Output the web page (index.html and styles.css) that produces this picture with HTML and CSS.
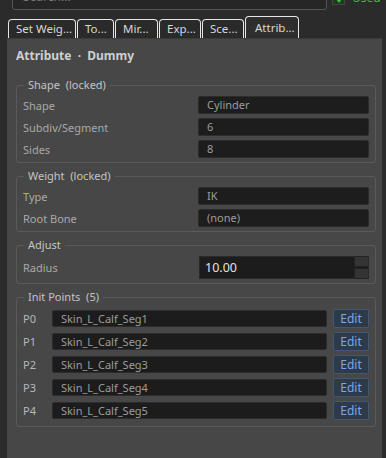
FILE: index.html
```html
<!DOCTYPE html>
<html>
<head>
  <meta charset="UTF-8">
  <meta name="viewport" content="width=device-width, initial-scale=1.0">
  <title>Attribute Panel</title>
  <link rel="stylesheet" href="styles.css">
</head>
<body>
  <div class="topbar">
    <div class="search">Search...</div>
    <label class="used">
      <span class="check">
        <svg width="8" height="8" viewBox="0 0 8 8"><path d="M1 3 L4 7 L7 3" fill="#3fbf3f"/></svg>
      </span>
      <span>Used</span>
    </label>
  </div>

  <div class="tabs">
    <div class="tab" style="width: 68px">Set Weig...</div>
    <div class="tab" style="width: 37px">To...</div>
    <div class="tab" style="width: 43px">Mir...</div>
    <div class="tab" style="width: 42px">Exp...</div>
    <div class="tab" style="width: 42px">Sce...</div>
    <div class="tab active" style="width: 54px">Attrib...</div>
  </div>

  <div class="panel">
    <h2 class="panel-title">Attribute &nbsp;·&nbsp; Dummy</h2>

    <fieldset class="group">
      <legend>Shape &nbsp;(locked)</legend>
      <div class="row"><span class="label">Shape</span><div class="field">Cylinder</div></div>
      <div class="row"><span class="label">Subdiv/Segment</span><div class="field">6</div></div>
      <div class="row"><span class="label">Sides</span><div class="field">8</div></div>
    </fieldset>

    <fieldset class="group">
      <legend>Weight &nbsp;(locked)</legend>
      <div class="row"><span class="label">Type</span><div class="field">IK</div></div>
      <div class="row"><span class="label">Root Bone</span><div class="field">(none)</div></div>
    </fieldset>

    <fieldset class="group">
      <legend>Adjust</legend>
      <div class="row">
        <span class="label">Radius</span>
        <div class="spin">
          <span class="spin-value">10.00</span>
          <div class="spin-buttons"><span></span><span></span></div>
        </div>
      </div>
    </fieldset>

    <fieldset class="group points">
      <legend>Init Points &nbsp;(5)</legend>
      <div id="point-list"></div>
    </fieldset>
  </div>

  <script>
    // Init points
    const points = ['Skin_L_Calf_Seg1', 'Skin_L_Calf_Seg2', 'Skin_L_Calf_Seg3', 'Skin_L_Calf_Seg4', 'Skin_L_Calf_Seg5'];
    const pointList = document.getElementById('point-list');

    points.forEach((name, index) => {
      const row = document.createElement('div');
      row.classList.add('point-row');
      row.innerHTML = `
        <span class="point-label">P${index}</span>
        <div class="point-field">${name}</div>
        <button class="edit-btn">Edit</button>
      `;
      pointList.appendChild(row);
    });
  </script>
</body>
</html>
```

FILE: styles.css
```css
body {
  margin: 0;
  background-color: #2b2b2b;
  font-family: "Noto Sans", "Noto Sans CJK KR", sans-serif;
  font-size: 11px;
  color: #b0b0b0;
  height: 458px;
  overflow: hidden;
}

.topbar {
  display: flex;
  align-items: flex-end;
  height: 10px;
}

.search {
  margin-left: 12px;
  width: 315px;
  height: 26px;
  flex-shrink: 0;
  border: 1px solid #555;
  border-radius: 3px;
  background-color: #262626;
  color: #777;
  font-size: 12px;
  line-height: 12px;
  padding-left: 10px;
  box-sizing: border-box;
  display: flex;
  align-items: flex-end;
  padding-bottom: 6px;
}

.used {
  display: flex;
  align-items: flex-end;
  margin-left: 5px;
  color: #3fbf3f;
  font-size: 12px;
  line-height: 12px;
  padding-bottom: 6px;
}

.check {
  width: 13px;
  height: 12px;
  box-sizing: border-box;
  background-color: #1f3b1f;
  border: 1px solid #444;
  display: flex;
  align-items: flex-end;
  justify-content: center;
  margin-right: 7px;
  margin-bottom: -1px;
}

.tabs {
  display: flex;
  align-items: flex-end;
  height: 28px;
  padding-left: 8px;
  gap: 1px;
}

.tab {
  height: 19px;
  box-sizing: border-box;
  border: 1px solid #e6e6e6;
  border-bottom: none;
  border-radius: 4px 4px 0 0;
  background-color: #2a2a2a;
  color: #d8d8d8;
  font-size: 11.5px;
  line-height: 18px;
  padding-left: 7px;
  white-space: nowrap;
  overflow: hidden;
}

.tab.active {
  height: 22px;
  line-height: 22px;
  padding-left: 9px;
  background-color: #2e2e2e;
}

.panel {
  margin-left: 7px;
  width: 375px;
  height: 420px;
  box-sizing: border-box;
  background-color: #474747;
  border-top: 1px solid #3a3a3a;
  padding: 0 6px 0 9px;
}

.panel-title {
  margin: 0;
  height: 39px;
  line-height: 34px;
  font-size: 12px;
  font-weight: bold;
  color: #cfcfcf;
}

.group {
  margin: 0 0 6px 0;
  border: 1px solid #5a5a5a;
  border-radius: 3px;
  padding: 4px 6px 4px 6px;
  min-width: 0;
}

.group legend {
  padding: 0 4px;
  margin-left: 1px;
  font-size: 11px;
  line-height: 14px;
  color: #c4c4c4;
}

.row {
  display: flex;
  align-items: center;
  justify-content: space-between;
  margin-bottom: 4px;
}

.row:last-child {
  margin-bottom: 0;
}

.label {
  color: #a9a9a9;
}

.field {
  width: 171px;
  height: 18px;
  box-sizing: border-box;
  background-color: #1d1d1d;
  border: 1px solid #2c2c2c;
  border-radius: 2px;
  color: #9c9c9c;
  line-height: 16px;
  padding-left: 8px;
}

.spin {
  width: 170px;
  height: 23px;
  box-sizing: border-box;
  background-color: #1c1c1c;
  border: 1px solid #2a2a2a;
  display: flex;
  align-items: center;
  justify-content: space-between;
  padding-left: 5px;
}

.spin-value {
  color: #e2e2e2;
  font-size: 12.5px;
}

.spin-buttons {
  display: flex;
  flex-direction: column;
  gap: 1px;
}

.spin-buttons span {
  width: 13px;
  height: 9px;
  background-color: #343434;
  border: 1px solid #222;
  border-right: none;
}

.points {
  padding-top: 3px;
  padding-bottom: 4px;
}

.point-row {
  display: flex;
  align-items: center;
  height: 23px;
}

.point-label {
  width: 29px;
  color: #b8b8b8;
}

.point-field {
  width: 276px;
  height: 17px;
  box-sizing: border-box;
  background-color: #1c1c1c;
  border: 1px solid #2c2c2c;
  border-radius: 2px;
  color: #9c9c9c;
  line-height: 15px;
  padding-left: 8px;
}

.edit-btn {
  margin-left: 6px;
  width: 36px;
  height: 19px;
  padding: 0;
  background-color: #2c3a4a;
  border: 1px solid #3f5875;
  border-radius: 2px;
  color: #7ea6e6;
  font-family: inherit;
  font-size: 12px;
  line-height: 16px;
}
```
